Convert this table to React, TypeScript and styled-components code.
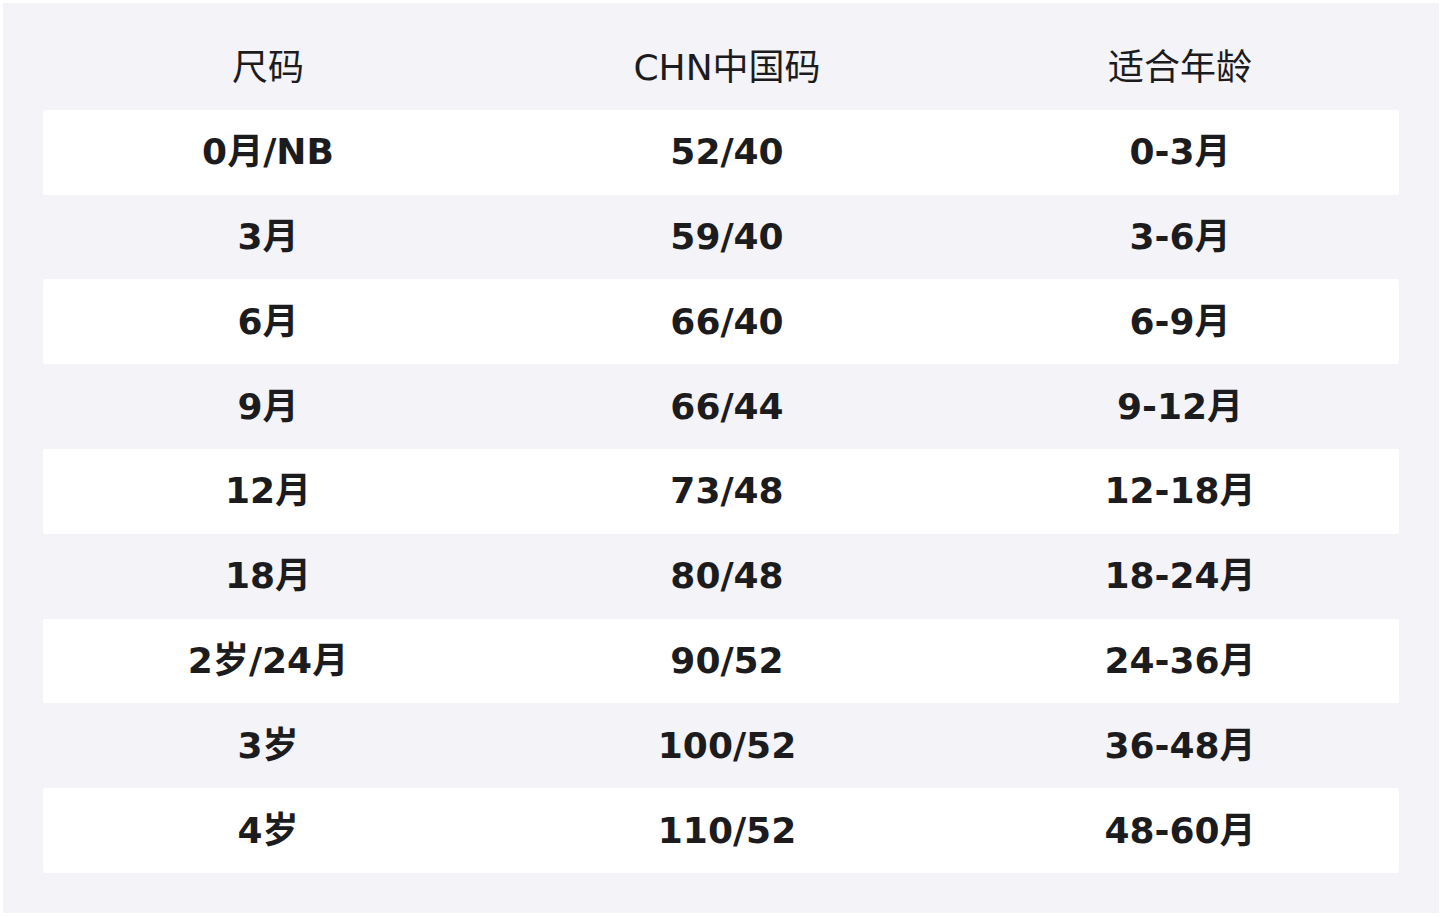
import React from "react";
import styled, { createGlobalStyle } from "styled-components";

const Global = createGlobalStyle`
  html, body { margin: 0; padding: 0; background: #ffffff; }
  body { padding: 3px; font-family: "DejaVu Sans", "Noto Sans CJK SC", sans-serif; }
`;

const Panel = styled.div`
  width: 1436px;
  height: 910px;
  box-sizing: border-box;
  background: #f3f3f8;
  padding: 22px 40px 40px;
  display: flex;
  flex-direction: column;
`;

const Row = styled.div<{ $white?: boolean }>`
  display: grid;
  grid-template-columns: 450px 468px 1fr;
  height: 85px;
  align-items: center;
  background: ${(p) => (p.$white ? "#ffffff" : "transparent")};
  border-radius: 2px;
`;

const HeadRow = styled(Row)`
  padding-top: 2px;
  box-sizing: border-box;
`;

const HeadCell = styled.div`
  text-align: center;
  font-size: 36px;
  line-height: 40px;
  font-weight: 400;
  color: #1c1c1e;
`;

const Cell = styled.div`
  text-align: center;
  font-size: 36px;
  line-height: 40px;
  font-weight: 700;
  color: #1c1c1e;
`;

const data: [string, string, string][] = [
  ["0月/NB", "52/40", "0-3月"],
  ["3月", "59/40", "3-6月"],
  ["6月", "66/40", "6-9月"],
  ["9月", "66/44", "9-12月"],
  ["12月", "73/48", "12-18月"],
  ["18月", "80/48", "18-24月"],
  ["2岁/24月", "90/52", "24-36月"],
  ["3岁", "100/52", "36-48月"],
  ["4岁", "110/52", "48-60月"],
];

export default function App() {
  return (
    <>
      <Global />
      <Panel>
        <HeadRow>
          <HeadCell>尺码</HeadCell>
          <HeadCell>CHN中国码</HeadCell>
          <HeadCell>适合年龄</HeadCell>
        </HeadRow>
        {data.map((r, i) => (
          <Row key={i} $white={i % 2 === 0}>
            <Cell>{r[0]}</Cell>
            <Cell>{r[1]}</Cell>
            <Cell>{r[2]}</Cell>
          </Row>
        ))}
      </Panel>
    </>
  );
}
